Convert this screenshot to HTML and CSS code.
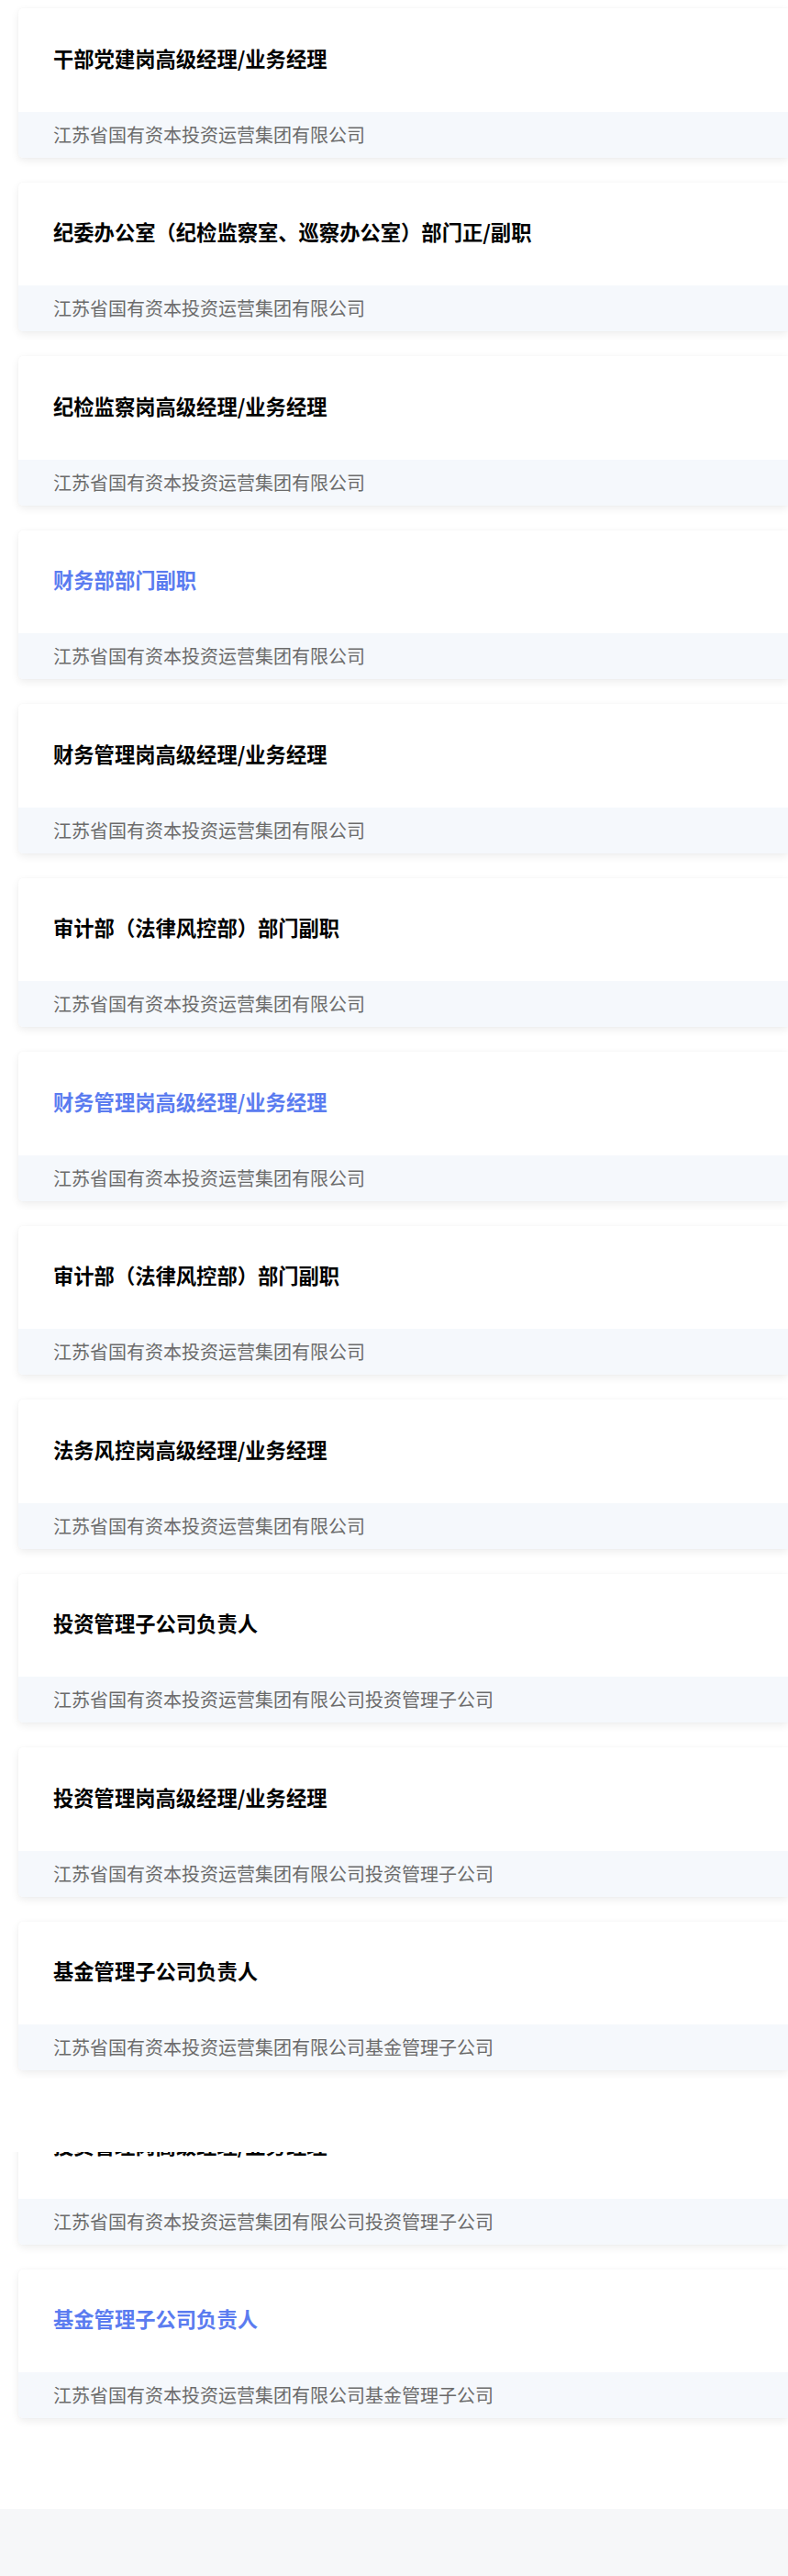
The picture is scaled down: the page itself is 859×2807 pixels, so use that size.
FILE: index.html
```html
<!DOCTYPE html>
<html lang="zh-CN">
<head>
<meta charset="utf-8">
<title>岗位列表</title>
<link rel="stylesheet" href="styles.css">
</head>
<body>
<div class="page">
  <div class="list">
    <div class="card"><div class="card-title">干部党建岗高级经理/业务经理</div><div class="card-org">江苏省国有资本投资运营集团有限公司</div></div>
    <div class="card"><div class="card-title">纪委办公室（纪检监察室、巡察办公室）部门正/副职</div><div class="card-org">江苏省国有资本投资运营集团有限公司</div></div>
    <div class="card"><div class="card-title">纪检监察岗高级经理/业务经理</div><div class="card-org">江苏省国有资本投资运营集团有限公司</div></div>
    <div class="card"><div class="card-title active">财务部部门副职</div><div class="card-org">江苏省国有资本投资运营集团有限公司</div></div>
    <div class="card"><div class="card-title">财务管理岗高级经理/业务经理</div><div class="card-org">江苏省国有资本投资运营集团有限公司</div></div>
    <div class="card"><div class="card-title">审计部（法律风控部）部门副职</div><div class="card-org">江苏省国有资本投资运营集团有限公司</div></div>
    <div class="card"><div class="card-title active">财务管理岗高级经理/业务经理</div><div class="card-org">江苏省国有资本投资运营集团有限公司</div></div>
    <div class="card"><div class="card-title">审计部（法律风控部）部门副职</div><div class="card-org">江苏省国有资本投资运营集团有限公司</div></div>
    <div class="card"><div class="card-title">法务风控岗高级经理/业务经理</div><div class="card-org">江苏省国有资本投资运营集团有限公司</div></div>
    <div class="card"><div class="card-title">投资管理子公司负责人</div><div class="card-org">江苏省国有资本投资运营集团有限公司投资管理子公司</div></div>
    <div class="card"><div class="card-title">投资管理岗高级经理/业务经理</div><div class="card-org">江苏省国有资本投资运营集团有限公司投资管理子公司</div></div>
    <div class="card"><div class="card-title">基金管理子公司负责人</div><div class="card-org">江苏省国有资本投资运营集团有限公司基金管理子公司</div></div>
    <div class="card"><div class="cover"></div><div class="card-title">投资管理岗高级经理/业务经理</div><div class="card-org">江苏省国有资本投资运营集团有限公司投资管理子公司</div></div>
    <div class="card"><div class="card-title active">基金管理子公司负责人</div><div class="card-org">江苏省国有资本投资运营集团有限公司基金管理子公司</div></div>
  </div>
  <div class="footer"></div>
</div>
</body>
</html>
```

FILE: styles.css
```css
html, body {
  margin: 0;
  padding: 0;
  background: #ffffff;
  overflow-x: hidden;
}

.page {
  font-family: "Noto Sans CJK SC", "Noto Sans", sans-serif;
  display: flex;
  flex-direction: column;
}

.list {
  display: flex;
  flex-direction: column;
  gap: 27px;
  padding: 9.2px 0 98.5px 19.5px;
}

.card {
  position: relative;
  height: 162.5px;
  display: flex;
  flex-direction: column;
  background: #ffffff;
  border-radius: 5px 0 0 5px;
  box-shadow: 0 3px 10px rgba(0, 0, 0, 0.075), 0 0 2px rgba(0, 0, 0, 0.04);
}

.card-title {
  height: 112.5px;
  box-sizing: border-box;
  padding: 0 0 5px 38.5px;
  display: flex;
  align-items: center;
  font-size: 22.3px;
  font-weight: 700;
  color: #000000;
  line-height: 1;
  white-space: nowrap;
}

.card-title.active {
  color: #5b7cf0;
}

.card-org {
  height: 50px;
  display: flex;
  align-items: center;
  padding-left: 38.5px;
  background: #f5f8fc;
  border-radius: 0 0 0 5px;
  font-size: 20px;
  color: #6b6b6b;
  line-height: 1;
  white-space: nowrap;
}

.cover {
  position: absolute;
  left: -19.5px;
  right: 0;
  top: -18px;
  height: 79.8px;
  background: #ffffff;
  z-index: 2;
}

.footer {
  height: 80px;
  background: #f6f7f9;
}
```
